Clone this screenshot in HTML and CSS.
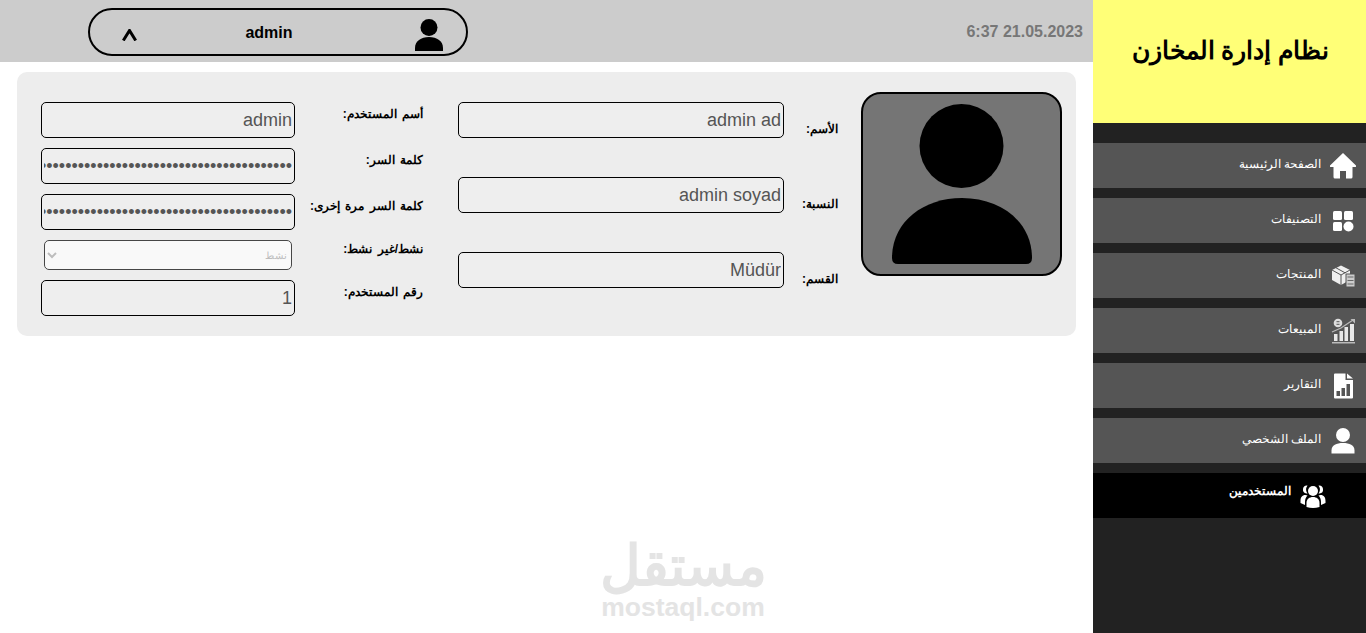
FILE: index.html
```html
<!DOCTYPE html>
<html lang="ar">
<head>
  <meta charset="UTF-8">
  <meta name="viewport" content="width=device-width, initial-scale=1.0">
  <title>نظام إدارة المخازن</title>
  <link rel="stylesheet" href="styles.css">
</head>
<body>
  <div class="app">
    <main class="main">
      <header class="topbar">
        <div class="user-pill">
          <span class="chevron">
            <svg width="15" height="12" viewBox="0 0 15 12"><path d="M1.300 11.500 7.500 1.500l6.200 10" fill="none" stroke="#000" stroke-width="3"/></svg>
          </span>
          <span class="user-name">admin</span>
          <svg class="user-icon" width="28" height="32" viewBox="0 0 28 32"><circle cx="14" cy="8.5" r="8.5"/><path d="M0 32v-3C0 22 6 18 14 18s14 4 14 11v3z"/></svg>
        </div>
        <div class="datetime">6:37 21.05.2023</div>
      </header>

      <section class="card" dir="rtl">
        <div class="photo">
          <svg width="197" height="180" viewBox="0 0 197 180">
            <circle cx="98.500" cy="52" r="42"/>
            <path d="M29 164C29 128 60 104 99 104s70 24 70 60q0 6-6 6H35q-6 0-6-6z"/>
          </svg>
        </div>

        <div class="form-col form-names">
          <label class="name-label">الأسم:</label>
          <input class="field" type="text" value="admin ad">
          <label class="name-label">النسبة:</label>
          <input class="field" type="text" value="admin soyad">
          <label class="name-label">القسم:</label>
          <input class="field" type="text" value="Müdür">
        </div>

        <div class="form-col form-account">
          <label class="account-label">أسم المستخدم:</label>
          <input class="field" type="text" value="admin">
          <label class="account-label">كلمة السر:</label>
          <input class="field" type="password" value="aaaaaaaaaaaaaaaaaaaaaaaaaaaaaaaaaaaaaaaaaaaaaaaaaaaaaaaa">
          <label class="account-label">كلمة السر مرة إخرى:</label>
          <input class="field" type="password" value="aaaaaaaaaaaaaaaaaaaaaaaaaaaaaaaaaaaaaaaaaaaaaaaaaaaaaaaa">
          <label class="account-label">نشط/غير نشط:</label>
          <select class="field-select" disabled><option>نشط</option></select>
          <label class="account-label">رقم المستخدم:</label>
          <input class="field" type="text" value="1">
        </div>
      </section>

      <div class="watermark">
        <div class="watermark-ar">مستقل</div>
        <div class="watermark-en">mostaql.com</div>
      </div>
    </main>

    <aside class="sidebar" dir="rtl">
      <div class="brand"><h1>نظام إدارة المخازن</h1></div>
      <nav class="menu">
        <a class="menu-item">
          <svg width="26" height="26" viewBox="0 0 26 26" fill="#fff"><path d="M13 0 0 12.500q-.5 1.500 1 1.500h2.500v10q0 1.500 1.500 1.500h5v-7.500h6v7.500h5q1.500 0 1.500-1.500V14H25q1.500 0 1-1.500z"/></svg>
          <span>الصفحة الرئيسية</span>
        </a>
        <a class="menu-item">
          <svg width="26" height="26" viewBox="0 0 26 26" fill="#fff"><rect x="3" y="3" width="9" height="9" rx="1.500"/><rect x="14" y="3" width="9" height="9" rx="1.500"/><rect x="3" y="14" width="9" height="9" rx="1.500"/><circle cx="18.500" cy="18.500" r="5"/></svg>
          <span>التصنيفات</span>
        </a>
        <a class="menu-item">
          <svg width="26" height="26" viewBox="0 0 26 26"><path d="M2 7 11 2.500 20 7v10l-9 5-9-5z" fill="#eee"/><path d="M2 7l9 5 9-5M11 12v10M6 4.800l9 5" fill="none" stroke="#555" stroke-width="1"/><rect x="16" y="11" width="9" height="13" fill="#ccc" stroke="#555"/><path d="M17.500 14h6M17.500 17.500h6M17.500 21h6" stroke="#666"/></svg>
          <span>المنتجات</span>
        </a>
        <a class="menu-item">
          <svg width="26" height="26" viewBox="0 0 26 26"><circle cx="8" cy="5" r="4.300" fill="#ddd"/><path d="M6.500 6.300h3M6.500 3.700h3" stroke="#555"/><path d="M2 14 11 10 17 6 23 2" fill="none" stroke="#bbb" stroke-width="1.200"/><path d="M20.500 1H25v4.500z" fill="#bbb"/><path d="M4 16h3.500v7H4zM9.500 13H13v10H9.500zM14.500 9H18v14h-3.500zM20 6h4v17h-4z" fill="#e8e8e8"/><rect x="2" y="24" width="23" height="1.500" fill="#bbb"/></svg>
          <span>المبيعات</span>
        </a>
        <a class="menu-item">
          <svg width="26" height="26" viewBox="0 0 26 26"><path d="M5 .5h10.500V7H23v17.500q0 1-1 1H5q-1 0-1-1v-23q0-1 1-1z" fill="#fff"/><path d="M17 .5 23 5.500h-6z" fill="#fff"/><path d="M6.500 18H10v5H6.500zM11.500 15H15v8h-3.500zM16.500 11H20v12h-3.500z" fill="#555"/></svg>
          <span>التقارير</span>
        </a>
        <a class="menu-item">
          <svg width="26" height="26" viewBox="0 0 26 26" fill="#fff"><circle cx="13" cy="7" r="7"/><path d="M1.500 25.500v-3C1.500 17 6.500 15 13 15s11.500 2 11.500 7.500v3z"/></svg>
          <span>الملف الشخصي</span>
        </a>
        <a class="menu-item active">
          <svg width="26" height="24" viewBox="0 0 26 24" fill="#fff"><circle cx="13" cy="7" r="5"/><path d="M6.500 23v-4c0-4 3-6 6.500-6s6.500 2 6.500 6v4q-6.500 2-13 0z"/><path d="M7.500 1.500a4 4 0 0 0-1 8c.5 0 1 0 1 0a7 7 0 0 1 0-8zM18.500 1.500a4 4 0 0 1 1 8c-.5 0-1 0-1 0a7 7 0 0 0 0-8z"/><path d="M5.500 11C2 11 .5 13.500.5 17v2l4.500 2v-3c0-3 1-5 2.500-6.500zM20.500 11c3.500 0 5 2.500 5 6v2L21 21v-3c0-3-1-5-2.500-6.500z"/></svg>
          <span>المستخدمين</span>
        </a>
      </nav>
    </aside>
  </div>
</body>
</html>
```

FILE: styles.css
```css
* {
  box-sizing: border-box;
}

html, body {
  margin: 0;
  height: 100%;
  overflow: hidden;
}

body {
  font-family: "Liberation Sans", "Noto Sans", sans-serif;
  background-color: #fff;
  color: #000;
}

.app {
  display: flex;
  height: 100vh;
}

.main {
  position: relative;
  flex: 1;
  min-width: 0;
}

.topbar {
  display: flex;
  justify-content: space-between;
  align-items: center;
  height: 62px;
  padding: 2px 10px 0 88px;
  background-color: #ccc;
}

.user-pill {
  display: flex;
  align-items: center;
  width: 380px;
  height: 48px;
  padding: 0 23px 0 32px;
  border: 2px solid #000;
  border-radius: 24px;
}

.chevron {
  display: flex;
  width: 15px;
  margin-top: 5px;
}

.user-name {
  flex: 1;
  text-align: center;
  font-size: 16px;
  font-weight: bold;
  padding: 2px 14px 0 0;
}

.user-icon {
  margin-top: 6px;
}

.datetime {
  font-size: 16px;
  font-weight: bold;
  color: #777;
}

.card {
  display: flex;
  align-items: flex-start;
  width: 1059px;
  height: 264px;
  margin: 10px 0 0 17px;
  padding: 20px 14px 0 24px;
  background-color: #ededed;
  border-radius: 10px;
}

.photo {
  display: flex;
  flex-shrink: 0;
  width: 201px;
  height: 184px;
  background-color: #757575;
  border: 2px solid #000;
  border-radius: 20px;
}

.form-col {
  display: grid;
  align-items: center;
}

.form-names {
  grid-template-columns: 54px 326px;
  row-gap: 39px;
  margin: 10px 23px 0 0;
}

.form-account {
  grid-template-columns: 128px 254px;
  row-gap: 10px;
  margin: 10px 35px 0 0;
}

.name-label {
  font-size: 12px;
  font-weight: bold;
  position: relative;
  top: 9px;
}

.account-label {
  font-size: 12px;
  font-weight: bold;
  word-spacing: 2px;
  position: relative;
  top: -6px;
}

.field {
  width: 100%;
  height: 36px;
  padding: 0 2px;
  font-family: inherit;
  font-size: 18px;
  color: #555;
  background-color: #eee;
  border: 1px solid #000;
  border-radius: 5px;
}

.field[type="text"] {
  direction: ltr;
  text-align: right;
}

.field-select {
  width: 248px;
  height: 30px;
  margin: 0 3px;
  font-family: inherit;
  font-size: 10px;
  color: #aaa;
  background-color: #fff;
  border: 1px solid #000;
  border-radius: 5px;
}

.sidebar {
  flex: 0 0 273px;
  background-color: #222;
}

.brand {
  display: flex;
  justify-content: center;
  height: 123px;
  padding: 33px 0 0 2px;
  background-color: #ff7;
}

.brand h1 {
  margin: 0;
  font-size: 25px;
  line-height: 34px;
}

.menu {
  display: flex;
  flex-direction: column;
  gap: 10px;
  padding-top: 20px;
}

.menu-item {
  display: flex;
  align-items: center;
  gap: 9px;
  height: 45px;
  padding-right: 10px;
  background-color: #555;
  color: #fff;
  font-size: 12px;
}

.menu-item span {
  margin-bottom: 3px;
}

.menu-item.active {
  padding-right: 40px;
  background-color: #000;
  font-weight: bold;
}

.menu-item.active span {
  margin-bottom: 9px;
}

.watermark {
  position: absolute;
  left: 500px;
  top: 537px;
  width: 366px;
  text-align: center;
  color: #e4e4e4;
  font-weight: bold;
}

.watermark-ar {
  font-size: 56px;
  line-height: 58px;
}

.watermark-en {
  font-size: 26.500px;
  line-height: 24px;
}
```
